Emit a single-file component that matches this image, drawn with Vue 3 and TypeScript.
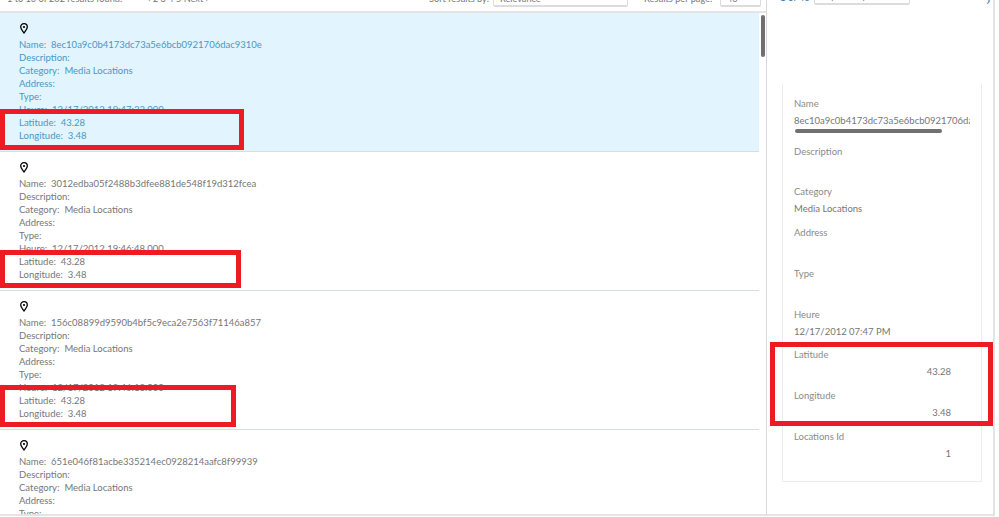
<script setup lang="ts">
interface Item { name: string; heure: string; selected?: boolean; box?: string }
const items: Item[] = [
  { name: '8ec10a9c0b4173dc73a5e6bcb0921706dac9310e', heure: '12/17/2012 19:47:23.000', selected: true, box: 'b1' },
  { name: '3012edba05f2488b3dfee881de548f19d312fcea', heure: '12/17/2012 19:46:48.000', box: 'b2' },
  { name: '156c08899d9590b4bf5c9eca2e7563f71146a857', heure: '12/17/2012 19:46:13.000', box: 'b3' },
  { name: '651e046f81acbe335214ec0928214aafc8f99939', heure: '12/17/2012 19:45:38.000' },
]
const fields = [
  { label: 'Name', value: '8ec10a9c0b4173dc73a5e6bcb0921706dac9310e' },
  { label: 'Description', value: '' },
  { label: 'Category', value: 'Media Locations' },
  { label: 'Address', value: '' },
  { label: 'Type', value: '' },
  { label: 'Heure', value: '12/17/2012 07:47 PM' },
  { label: 'Latitude', value: '43.28', num: true },
  { label: 'Longitude', value: '3.48', num: true },
  { label: 'Locations Id', value: '1', num: true },
]
</script>

<template>
  <div class="page">
    <main class="results">
      <header class="toolbar">
        <span class="count">1 to 10 of 262 results found.</span>
        <span class="pager">‹ 2 3 4 5 Next ›</span>
        <span class="sort-label">Sort results by:</span>
        <span class="select sort">Relevance<i class="caret"></i></span>
        <span class="per-label">Results per page:</span>
        <span class="select per">40<i class="caret"></i></span>
      </header>
      <div class="list">
        <article v-for="item in items" :key="item.name" class="item" :class="{ selected: item.selected }">
          <svg class="pin" width="8" height="11" viewBox="0 0 8 11" aria-hidden="true">
            <path d="M4 .7C2 .7.7 2.200.7 4c0 2.200 2 4.100 3.300 6 1.300-1.900 3.300-3.800 3.300-6C7.300 2.200 6 .7 4 .7z" fill="none" stroke="#000" stroke-width="1.300" />
            <circle cx="4" cy="4" r="1.100" fill="#000" />
          </svg>
          <p><span class="k">Name:</span>{{ item.name }}</p>
          <p><span class="k">Description:</span></p>
          <p><span class="k">Category:</span>Media Locations</p>
          <p><span class="k">Address:</span></p>
          <p><span class="k">Type:</span></p>
          <p><span class="k">Heure:</span>{{ item.heure }}</p>
          <p><span class="k">Latitude:</span>43.28</p>
          <p><span class="k">Longitude:</span>3.48</p>
          <div v-if="item.box" class="mark" :class="item.box"></div>
        </article>
        <div class="thumb"></div>
      </div>
    </main>
    <aside class="detail">
      <div class="detail-top">
        <span class="link">1 of 40</span>
        <span class="select jump">Layer sample</span>
        <span class="chev">›</span>
      </div>
      <section class="card">
        <div v-for="f in fields" :key="f.label" class="field">
          <div class="label">{{ f.label }}</div>
          <div class="value" :class="{ num: f.num }">{{ f.value }}</div>
        </div>
        <div class="hscroll"></div>
      </section>
      <div class="mark b4"></div>
    </aside>
  </div>
</template>

<style>
html, body { margin: 0; background: #fff; }
</style>

<style scoped>
.page {
  width: 995px;
  height: 516px;
  display: flex;
  overflow: hidden;
  box-sizing: border-box;
  border-bottom: 2px solid #e4e4e4;
  font-family: Lato, "Open Sans", sans-serif;
  font-size: 9.500px;
  color: #767676;
  position: relative;
}
.results { width: 766px; flex: none; display: flex; flex-direction: column; }
.toolbar {
  height: 13px;
  flex: none;
  position: relative;
  overflow: hidden;
  box-sizing: border-box;
  border-bottom: 2px solid #e4e4e4;
  font-size: 9.200px;
}
.toolbar > span { position: absolute; bottom: 6px; line-height: 13px; white-space: nowrap; }
.count { left: 7px; }
.pager { left: 148px; }
.sort-label { left: 429px; }
.per-label { left: 644px; }
.select {
  box-sizing: border-box;
  height: 20px;
  padding: 4px 6px 0;
  border: 1px solid #dcdcdc;
  border-width: 1px 1px 2px;
  border-radius: 2px;
  background: #fff;
  display: block;
}
.toolbar .select { bottom: 4px; }
.caret {
  position: absolute;
  right: 8px;
  bottom: 9px;
  width: 2px;
  height: 2px;
  background: #8a8a8a;
}
.sort { left: 493px; width: 135px; }
.per { left: 720px; width: 41px; }
.list { position: relative; flex: 1; overflow: hidden; }
.item {
  position: relative;
  width: 759px;
  height: 139px;
  box-sizing: border-box;
  padding: 10px 0 0 19px;
  border-bottom: 1px solid #d8dde0;
}
.item.selected { background: #e2f4fe; color: #4a97c4; }
.pin { display: block; margin: 0 0 4px 1px; }
.item p { margin: 0; height: 13px; line-height: 13px; white-space: nowrap; }
.k { margin-right: 5px; }
.thumb {
  position: absolute;
  left: 761px;
  top: 2px;
  width: 4px;
  height: 42px;
  border-radius: 2px;
  background: #707070;
}
.detail {
  width: 229px;
  flex: none;
  position: relative;
  box-sizing: border-box;
  border-left: 1px solid #d9d9d9;
  border-right: 2px solid #e4e4e4;
}
.detail-top { height: 71px; position: relative; overflow: hidden; }
.detail-top > span { position: absolute; bottom: 67px; line-height: 13px; white-space: nowrap; }
.link { left: 13px; color: #2b7cb8; }
.detail-top > .jump { left: 47px; width: 96px; height: 20px; overflow: hidden; bottom: 66px; padding-top: 3px; }
.detail-top > .chev { left: 219px; color: #2b7cb8; font-size: 16px; bottom: 66px; }
.card {
  position: relative;
  margin: 12px 0 0 15px;
  width: 200px;
  height: 399px;
  box-sizing: border-box;
  padding: 14px 11px 0;
  border: 1px solid #ececec;
  border-top: none;
}
.field { height: 40.800px; overflow: hidden; }
.field:first-child { height: 47.500px; }
.label { line-height: 13px; height: 13px; color: #8a8a8a; }
.value { margin-top: 4px; height: 13px; line-height: 13px; white-space: nowrap; overflow: hidden; }
.value.num { text-align: right; padding-right: 19px; }
.hscroll {
  position: absolute;
  left: 12px;
  top: 46px;
  width: 147px;
  height: 4px;
  border-radius: 2px;
  background: #707070;
}
.mark { position: absolute; box-sizing: border-box; border: 5px solid #ed1c24; pointer-events: none; }
.b1 { left: 0; top: 96px; width: 244px; height: 41px; }
.b2 { left: 0; top: 98px; width: 241px; height: 38px; }
.b3 { left: 0; top: 94px; width: 236px; height: 42px; }
.b4 { left: 3px; top: 342px; width: 223px; height: 84px; }
</style>
